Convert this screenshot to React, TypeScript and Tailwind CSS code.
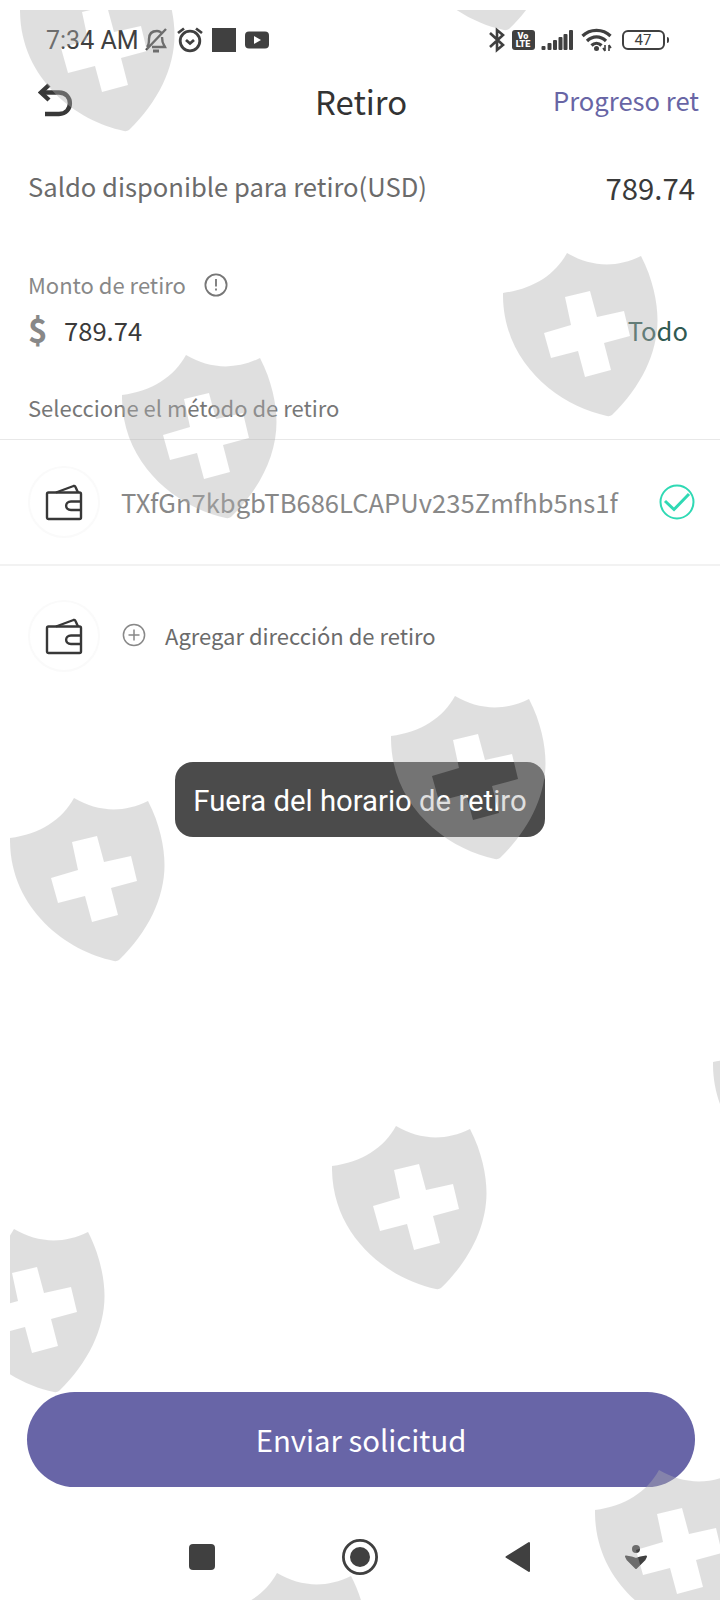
import React from "react";

const SHIELDS = [
	{ x: 20, y: -32 },
	{ x: 400, y: -133 },
	{ x: 503, y: 253 },
	{ x: 122, y: 355 },
	{ x: 391, y: 696 },
	{ x: 10, y: 798 },
	{ x: 713, y: 1022 },
	{ x: 332, y: 1126 },
	{ x: -50, y: 1229 },
	{ x: 595, y: 1470 },
	{ x: 213, y: 1573 },
];

const Shield = ({ x, y }: { x: number; y: number }) => (
	<svg className="absolute" fill="#b1b1b1" fillRule="evenodd" height="164" style={{ left: x - 10, top: y - 10 }} width="156">
		<path d="M0 40C30 36 52 22 64 0C86 13 112 16 138 3C150 26 154.500 50 154.500 67C154.500 100 138 134 109 162Q107 163.500 104 163C56 153 -1 110 0 40ZM62 44L87 38L94 64L121 58L127 83L101 90L108 117L82 124L75 98L48 105L41 80L68 72Z" />
	</svg>
);

const StatusBar = () => (
	<div className="flex h-[58px] items-center pt-[21px] pr-[51px] pl-[46px] text-[#404040]">
		<span className="w-[98px] pt-[2px] font-[Roboto] text-[25px] leading-none whitespace-nowrap">7:34 AM</span>
		<svg fill="none" height="26" stroke="currentColor" strokeWidth="2.4" viewBox="0 0 24 26" width="24">
			<path d="M2 23L22 2M3 20C5 18 5 16 5 12C5 7 8 4 13 4C15 4 17 5 18 7M18 10C18 17 20 18 21 20H8" />
			<path d="M9 24H15" strokeWidth="3" />
		</svg>
		<svg className="ml-[9px]" fill="none" height="26" stroke="currentColor" strokeWidth="2.8" viewBox="0 0 26 26" width="26">
			<circle cx="13" cy="14" r="9.800" />
			<path d="M1 6L7 1.5M25 6L19 1.5M9 13L13 16.5L17 13" />
		</svg>
		<div className="ml-[9px] size-6 bg-[#404040]" />
		<svg className="ml-[9px]" height="18" width="25">
			<rect fill="currentColor" height="17" rx="4" width="24" y="0.5" />
			<path d="M9 5L16 9L9 13Z" fill="#fff" />
		</svg>
		<div className="grow" />
		<svg fill="none" height="26" stroke="currentColor" strokeWidth="2.6" viewBox="0 0 16 26" width="16">
			<path d="M1 6L14 18L8 23V3L14 8L1 20" />
		</svg>
		<div className="ml-[7px] flex h-[20px] w-[23px] flex-col items-center justify-center rounded-[3px] bg-[#404040] font-[Roboto] text-[9px] leading-[8px] font-black text-white">
			<span>Vo</span>
			<span>LTE</span>
		</div>
		<svg className="ml-[6px]" fill="currentColor" height="22" width="33">
			<rect height="4" rx="1" width="4" x="0.500" y="17" />
			<rect height="7" rx="1" width="4" x="6.500" y="14" />
			<rect height="10" rx="1" width="4" x="12" y="11" />
			<rect height="13" rx="1" width="4" x="17.500" y="8" />
			<rect height="16" rx="1" width="4" x="22.500" y="5" />
			<rect height="20" rx="1" width="4" x="28" y="1" />
		</svg>
		<svg className="ml-[7px]" fill="none" height="24" stroke="currentColor" strokeWidth="3.200" viewBox="0 0 32 24" width="32">
			<path d="M1.500 8C9 0.500 22 0.500 29.500 8M6 13C11.500 7.500 19.500 7.500 25 13M10.500 17.500C13.500 14.500 17.500 14.500 20.500 17.500" />
			<circle cx="15.500" cy="20.500" fill="currentColor" r="2.500" stroke="none" />
			<path d="M24 17V23M22 20L24 23M28 23V17M30 20L28 17" strokeWidth="1.600" />
		</svg>
		<div className="ml-[9px] flex h-[20px] w-[43px] items-center justify-center rounded-[6px] border-2 border-[#404040] pt-[2px] font-[Roboto] text-[15px] leading-none">
			47
		</div>
		<div className="ml-[2px] h-[6px] w-[2.500px] rounded-r bg-[#404040]" />
	</div>
);

const WalletIcon = () => (
	<div className="flex size-[72px] shrink-0 items-center justify-center rounded-full border-2 border-[#fafafa]">
		<svg fill="none" height="38" stroke="#383838" strokeLinejoin="round" strokeWidth="2.400" viewBox="0 0 38 38" width="38">
			<rect height="26.500" rx="1.500" width="34" x="2" y="9.500" />
			<path d="M11 9.500L28.500 3Q30 2.500 30.500 4L33 9.500M36 18.500H26C19.500 18.500 19.500 27 26 27H36" />
		</svg>
	</div>
);

const NavBar = () => (
	<div className="mt-[50px] flex h-[40px] items-center text-[#404040]">
		<div className="ml-[188.500px] size-[26px] rounded-[4px] bg-[#404040]" />
		<svg className="ml-[127px]" height="36" width="36">
			<circle cx="18" cy="18" fill="none" r="16.600" stroke="currentColor" strokeWidth="2.800" />
			<circle cx="18" cy="18" fill="currentColor" r="10" />
		</svg>
		<svg className="ml-[127px]" height="32" width="26">
			<path d="M1.500 16L24 2V30Z" fill="currentColor" stroke="currentColor" strokeLinejoin="round" strokeWidth="2" />
		</svg>
		<svg className="ml-[93px]" height="26" width="24">
			<circle cx="12" cy="5" fill="currentColor" r="4" />
			<path d="M2 12.500L7.500 13.500L12 15L16.500 13.500L22 12.500L20.500 15.500L12 24L3.500 15.500Z" fill="currentColor" stroke="currentColor" strokeLinejoin="round" strokeWidth="2" />
		</svg>
	</div>
);

export default function App() {
	return (
		<div className="relative h-[1600px] w-[720px] overflow-hidden bg-white font-['Noto_Sans_CJK_SC',sans-serif]">
			<StatusBar />
			<header className="relative flex h-[86px] items-center justify-between pr-[21px] pb-[2px] pl-[38px]">
				<svg fill="none" height="35" stroke="#383838" strokeWidth="4.400" viewBox="0 0 35 35" width="35">
					<path d="M3 9.500H21C35.500 9.500 35.500 31 21 31H7" />
					<path d="M11 2L3 9.500L11 17" />
				</svg>
				<h1 className="absolute left-[315px] pt-[2px] text-[32.900px] leading-none text-[#333]">Retiro</h1>
				<span className="text-[25.600px] leading-none text-[#6865a5]">Progreso ret</span>
			</header>
			<section className="flex h-[88px] items-center justify-between pr-[25px] pb-[3px] pl-[28px]">
				<span className="pb-[2px] text-[25.600px] leading-none text-[#6b6b6b]">Saldo disponible para retiro(USD)</span>
				<span className="pt-[2px] text-[29.300px] leading-none text-[#3a3a3a]">789.74</span>
			</section>
			<section className="flex flex-col pr-[32px] pl-[28px]">
				<div className="mt-[32px] flex h-[42px] items-center text-[22px] leading-none text-[#888]">
					<span className="pb-[2px]">Monto de retiro</span>
					<svg className="ml-[18px]" fill="none" height="24" stroke="#777" strokeWidth="1.800" width="24">
						<circle cx="12" cy="12" r="10.600" />
						<path d="M12 6V13.500M12 15.500V17.500" />
					</svg>
				</div>
				<div className="mt-[3px] flex h-[42px] items-center leading-none">
					<span className="w-[36px] pb-[2px] text-[33px] font-bold text-[#888]">$</span>
					<span className="grow text-[25.600px] text-[#3a3a3a]">789.74</span>
					<span className="text-[25.600px] text-[#2f5a52]">Todo</span>
				</div>
				<div className="mt-[36px] flex h-[42px] items-center pb-[2px] text-[22px] leading-none text-[#777]">
					Seleccione el método de retiro
				</div>
			</section>
			<section className="mt-[10px] flex h-[127px] items-center border-t border-b-2 border-t-[#e8e8e8] border-b-[#f2f2f2] pl-[28px]">
				<WalletIcon />
				<span className="ml-[21px] w-[538px] text-[25.600px] leading-none text-[#888]">TXfGn7kbgbTB686LCAPUv235Zmfhb5ns1f</span>
				<svg fill="none" height="36" stroke="#2fd9b4" width="36">
					<circle cx="18" cy="18" r="16.500" strokeWidth="2" />
					<path d="M6 17L15 25.500L30 10" strokeWidth="3" />
				</svg>
			</section>
			<section className="mt-[34px] flex h-[72px] items-center pl-[28px]">
				<WalletIcon />
				<svg className="mb-[2px] ml-[22px]" fill="none" height="24" stroke="#888" strokeWidth="1.500" width="24">
					<circle cx="12" cy="12" r="10.600" />
					<path d="M12 6.500V17.500M6.500 12H17.500" />
				</svg>
				<span className="ml-[19px] pb-[3px] text-[22px] leading-none text-[#6b6b6b]">Agregar dirección de retiro</span>
			</section>
			<button className="mt-[720px] ml-[27px] flex h-[95px] w-[668px] items-center justify-center rounded-full bg-[#6865a7] text-[29.300px] leading-none text-white">
				Enviar solicitud
			</button>
			<NavBar />
			<div className="absolute top-[762px] left-[175px] flex h-[75px] w-[370px] items-center justify-center rounded-[18px] bg-[#4b4b4b] pt-[4px] font-[Roboto] text-[29.300px] leading-none whitespace-nowrap text-white">
				Fuera del horario de retiro
			</div>
			<div className="pointer-events-none absolute top-[10px] right-0 bottom-0 left-[10px] overflow-hidden opacity-40">
				{SHIELDS.map(({ x, y }) => (
					<Shield key={`${x}-${y}`} x={x} y={y} />
				))}
			</div>
		</div>
	);
}
